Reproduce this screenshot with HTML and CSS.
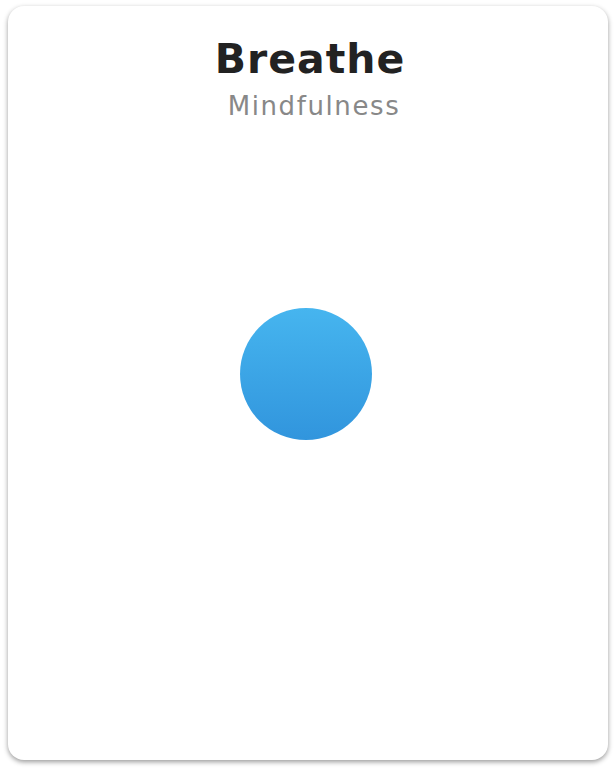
FILE: index.html
```html
<!DOCTYPE html>
<html>
<head>
<meta charset="utf-8">
<link rel="stylesheet" href="styles.css">
</head>
<body>
<div class="card">
  <header class="head">
    <h1 class="title">Breathe</h1>
    <p class="subtitle">Mindfulness</p>
  </header>
  <div class="stage">
    <div class="orb"></div>
  </div>
</div>
</body>
</html>
```
FILE: styles.css
```css
html, body {
  margin: 0;
  padding: 0;
  background: #ffffff;
}
body {
  padding: 6px 8px 10px 8px;
  font-family: "DejaVu Sans", sans-serif;
}
.card {
  height: 754px;
  box-sizing: border-box;
  background: #fff;
  border-radius: 16px;
  box-shadow: 0 2px 5px rgba(0,0,0,0.4);
  display: flex;
  flex-direction: column;
  align-items: center;
}
.head {
  padding-top: 27px;
  padding-left: 4px;
  text-align: center;
}
.title {
  margin: 0;
  font-size: 41px;
  line-height: 52px;
  font-weight: bold;
  color: #222;
  letter-spacing: 1px;
}
.subtitle {
  margin: 6px 0 0 0;
  padding-left: 8px;
  font-size: 26px;
  line-height: 30px;
  color: #888;
  letter-spacing: 1.6px;
}
.stage {
  padding-top: 187px;
  padding-right: 4px;
}
.orb {
  width: 132px;
  height: 132px;
  border-radius: 50%;
  background: linear-gradient(to bottom, #46b5ef, #3195dd);
}
```
